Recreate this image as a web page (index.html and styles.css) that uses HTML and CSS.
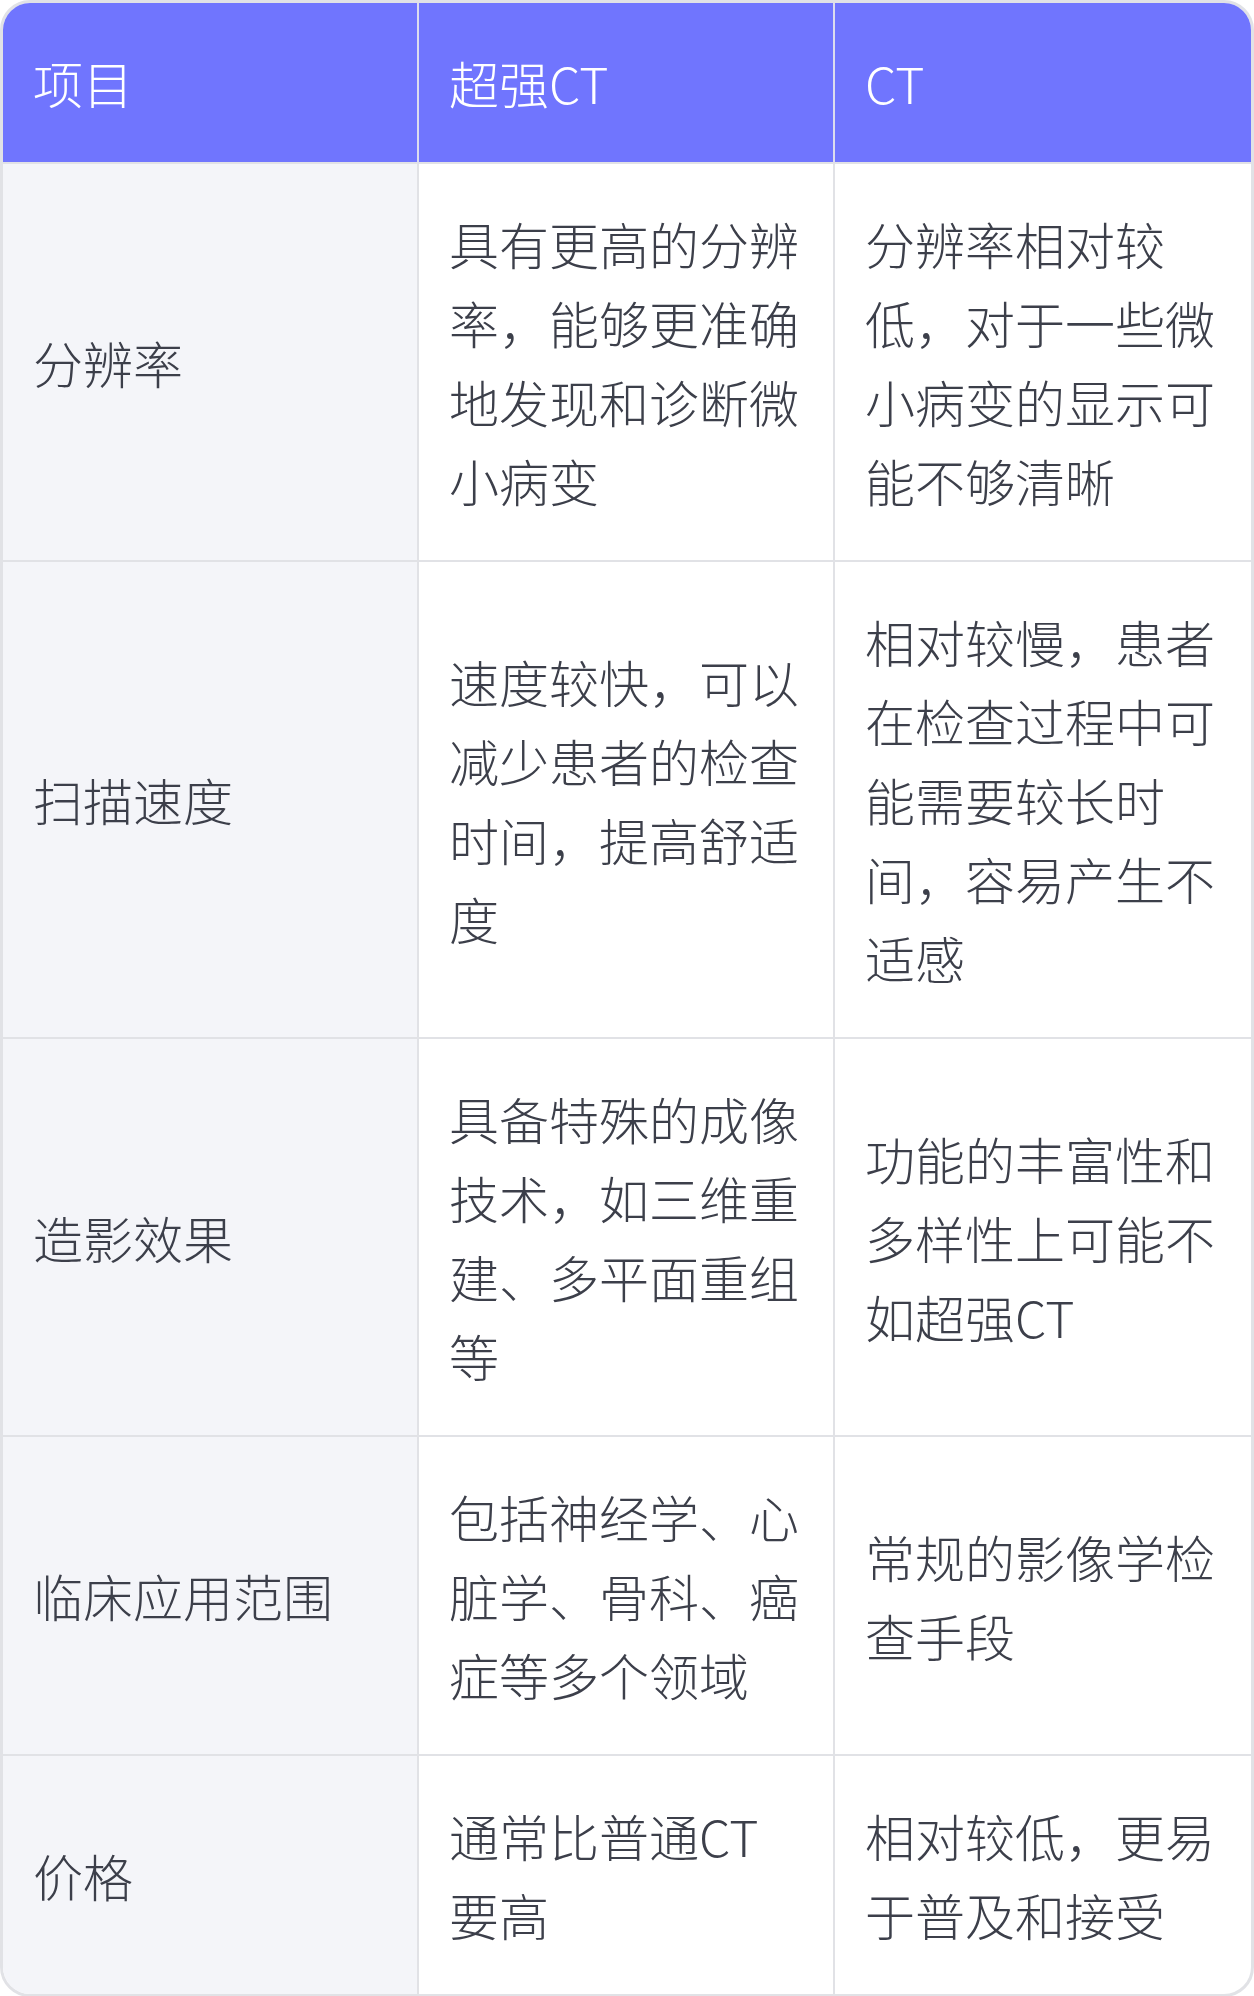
FILE: index.html
```html
<!DOCTYPE html>
<html lang="zh-CN">
<head>
    <meta charset="UTF-8">
    <meta name="viewport" content="width=device-width, initial-scale=1.0">
    <title>超强CT与CT对比</title>
    <link rel="stylesheet" href="styles.css">
</head>
<body>
    <div class="table-wrap">
        <table class="compare">
            <thead>
                <tr>
                    <th>项目</th>
                    <th>超强CT</th>
                    <th>CT</th>
                </tr>
            </thead>
            <tbody>
                <tr>
                    <td>分辨率</td>
                    <td>具有更高的分辨率，能够更准确地发现和诊断微小病变</td>
                    <td>分辨率相对较低，对于一些微小病变的显示可能不够清晰</td>
                </tr>
                <tr>
                    <td>扫描速度</td>
                    <td>速度较快，可以减少患者的检查时间，提高舒适度</td>
                    <td>相对较慢，患者在检查过程中可能需要较长时间，容易产生不适感</td>
                </tr>
                <tr>
                    <td>造影效果</td>
                    <td>具备特殊的成像技术，如三维重建、多平面重组等</td>
                    <td>功能的丰富性和多样性上可能不如超强CT</td>
                </tr>
                <tr>
                    <td>临床应用范围</td>
                    <td>包括神经学、心脏学、骨科、癌症等多个领域</td>
                    <td>常规的影像学检查手段</td>
                </tr>
                <tr>
                    <td>价格</td>
                    <td>通常比普通CT要高</td>
                    <td>相对较低，更易于普及和接受</td>
                </tr>
            </tbody>
        </table>
    </div>
</body>
</html>
```

FILE: styles.css
```css
* {
    margin: 0;
    padding: 0;
    box-sizing: border-box;
}

body {
    font-family: "Noto Sans CJK SC", "Noto Sans", sans-serif;
    font-weight: 300;
    background: #ffffff;
    color: #3c3f4a;
}

.table-wrap {
    border: 3px solid #e1e2e6;
    border-radius: 30px;
    overflow: hidden;
}

.compare {
    width: 100%;
    table-layout: fixed;
    border-collapse: separate;
    border-spacing: 0;
    font-size: 50px;
    line-height: 79px;
}

.compare th,
.compare td {
    padding: 40px 30px;
    text-align: left;
    vertical-align: middle;
    border-right: 2px solid #e1e2e6;
    border-bottom: 2px solid #e1e2e6;
}

.compare th:last-child,
.compare td:last-child {
    border-right: none;
}

.compare tbody tr:last-child td {
    border-bottom: none;
}

.compare th {
    background: #7075fe;
    color: #ffffff;
    font-weight: 300;
    border-right-color: #dcdcee;
    border-bottom-color: #e1e2e6;
}

.compare td:first-child {
    background: #f4f5f9;
}
```
